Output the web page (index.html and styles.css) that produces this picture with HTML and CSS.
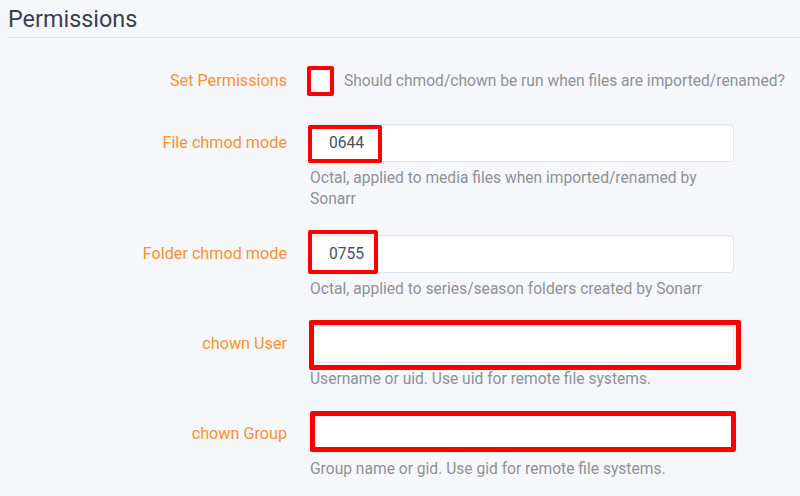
FILE: index.html
```html
<!DOCTYPE html>
<html lang="en">
<head>
<meta charset="utf-8">
<title>Permissions</title>
<link rel="stylesheet" href="styles.css">
</head>
<body>
<fieldset class="section">
  <legend class="legend">Permissions</legend>

  <div class="group">
    <label class="label label-check">Set Permissions</label>
    <div class="control check-row">
      <span class="check-wrap">
        <span class="checkbox"></span>
        <span class="mark mark-check"></span>
      </span>
      <span class="help inline">Should chmod/chown be run when files are imported/renamed?</span>
    </div>
  </div>

  <div class="group">
    <label class="label">File chmod mode</label>
    <div class="control">
      <div class="field">
        <div class="input">0644</div>
        <span class="mark mark-file"></span>
      </div>
      <div class="help">Octal, applied to media files when imported/renamed by Sonarr</div>
    </div>
  </div>

  <div class="group">
    <label class="label">Folder chmod mode</label>
    <div class="control">
      <div class="field">
        <div class="input">0755</div>
        <span class="mark mark-folder"></span>
      </div>
      <div class="help">Octal, applied to series/season folders created by Sonarr</div>
    </div>
  </div>

  <div class="group">
    <label class="label">chown User</label>
    <div class="control">
      <div class="field">
        <div class="input"></div>
        <span class="mark mark-user"></span>
      </div>
      <div class="help">Username or uid. Use uid for remote file systems.</div>
    </div>
  </div>

  <div class="group">
    <label class="label">chown Group</label>
    <div class="control">
      <div class="field">
        <div class="input"></div>
        <span class="mark mark-group"></span>
      </div>
      <div class="help">Group name or gid. Use gid for remote file systems.</div>
    </div>
  </div>
</fieldset>
</body>
</html>
```

FILE: styles.css
```css
html, body {
  margin: 0;
  padding: 0;
  background: #f5f7fa;
  font-family: Roboto, "Open Sans", sans-serif;
  font-size: 15.6px;
  overflow: hidden;
}

.section {
  margin: 0 0 0 8px;
  padding: 0;
  border: 0;
  min-width: 0;
}

.legend {
  display: block;
  width: 100%;
  box-sizing: border-box;
  padding: 0;
  height: 38px;
  line-height: 38px;
  font-size: 23.4px;
  color: #3a3f51;
  border-bottom: 1px solid #e5e5e5;
  margin-bottom: 23px;
}

.group {
  display: flex;
  align-items: flex-start;
  margin-bottom: 25px;
}

.label {
  width: 279px;
  flex: none;
  margin-right: 23px;
  text-align: right;
  line-height: 38px;
  color: #ff902b;
  font-size: 16.2px;
  font-weight: 400;
}

.label-check {
  padding-top: 2px;
  line-height: 36px;
}

.control {
  width: 424px;
  flex: none;
}

.check-row {
  display: flex;
  align-items: center;
  height: 38px;
  width: 490px;
}

.check-wrap {
  position: relative;
  width: 20px;
  height: 21px;
  margin-left: 1px;
  margin-right: 13px;
  flex: none;
}

.checkbox {
  display: block;
  width: 20px;
  height: 21px;
  background: #fff;
}

.field {
  position: relative;
}

.input {
  box-sizing: border-box;
  height: 38px;
  line-height: 36px;
  padding: 0 18px;
  background: #fff;
  border: 1px solid #dde6e9;
  border-radius: 4px;
  box-shadow: inset 0 1px 1px rgba(0, 0, 0, 0.05);
  color: #4a4f5c;
}

.help {
  margin-top: 6px;
  line-height: 21px;
  color: #909293;
}

.help.inline {
  margin-top: 0;
  padding-top: 3px;
  white-space: nowrap;
}

.mark {
  position: absolute;
  box-sizing: border-box;
  border: 4px solid #ff0000;
  border-radius: 2px;
}

.mark-check {
  left: -4px;
  top: -4px;
  width: 27px;
  height: 30px;
}

.mark-file {
  left: -2px;
  top: 1px;
  width: 74px;
  height: 38px;
}

.mark-folder {
  left: -2px;
  top: -5px;
  width: 70px;
  height: 44px;
}

.mark-user {
  left: -1px;
  top: -5px;
  width: 432px;
  height: 50px;
  border-width: 5px;
}

.mark-group {
  left: 0;
  top: -4px;
  width: 426px;
  height: 41px;
  border-width: 5px;
}
```
